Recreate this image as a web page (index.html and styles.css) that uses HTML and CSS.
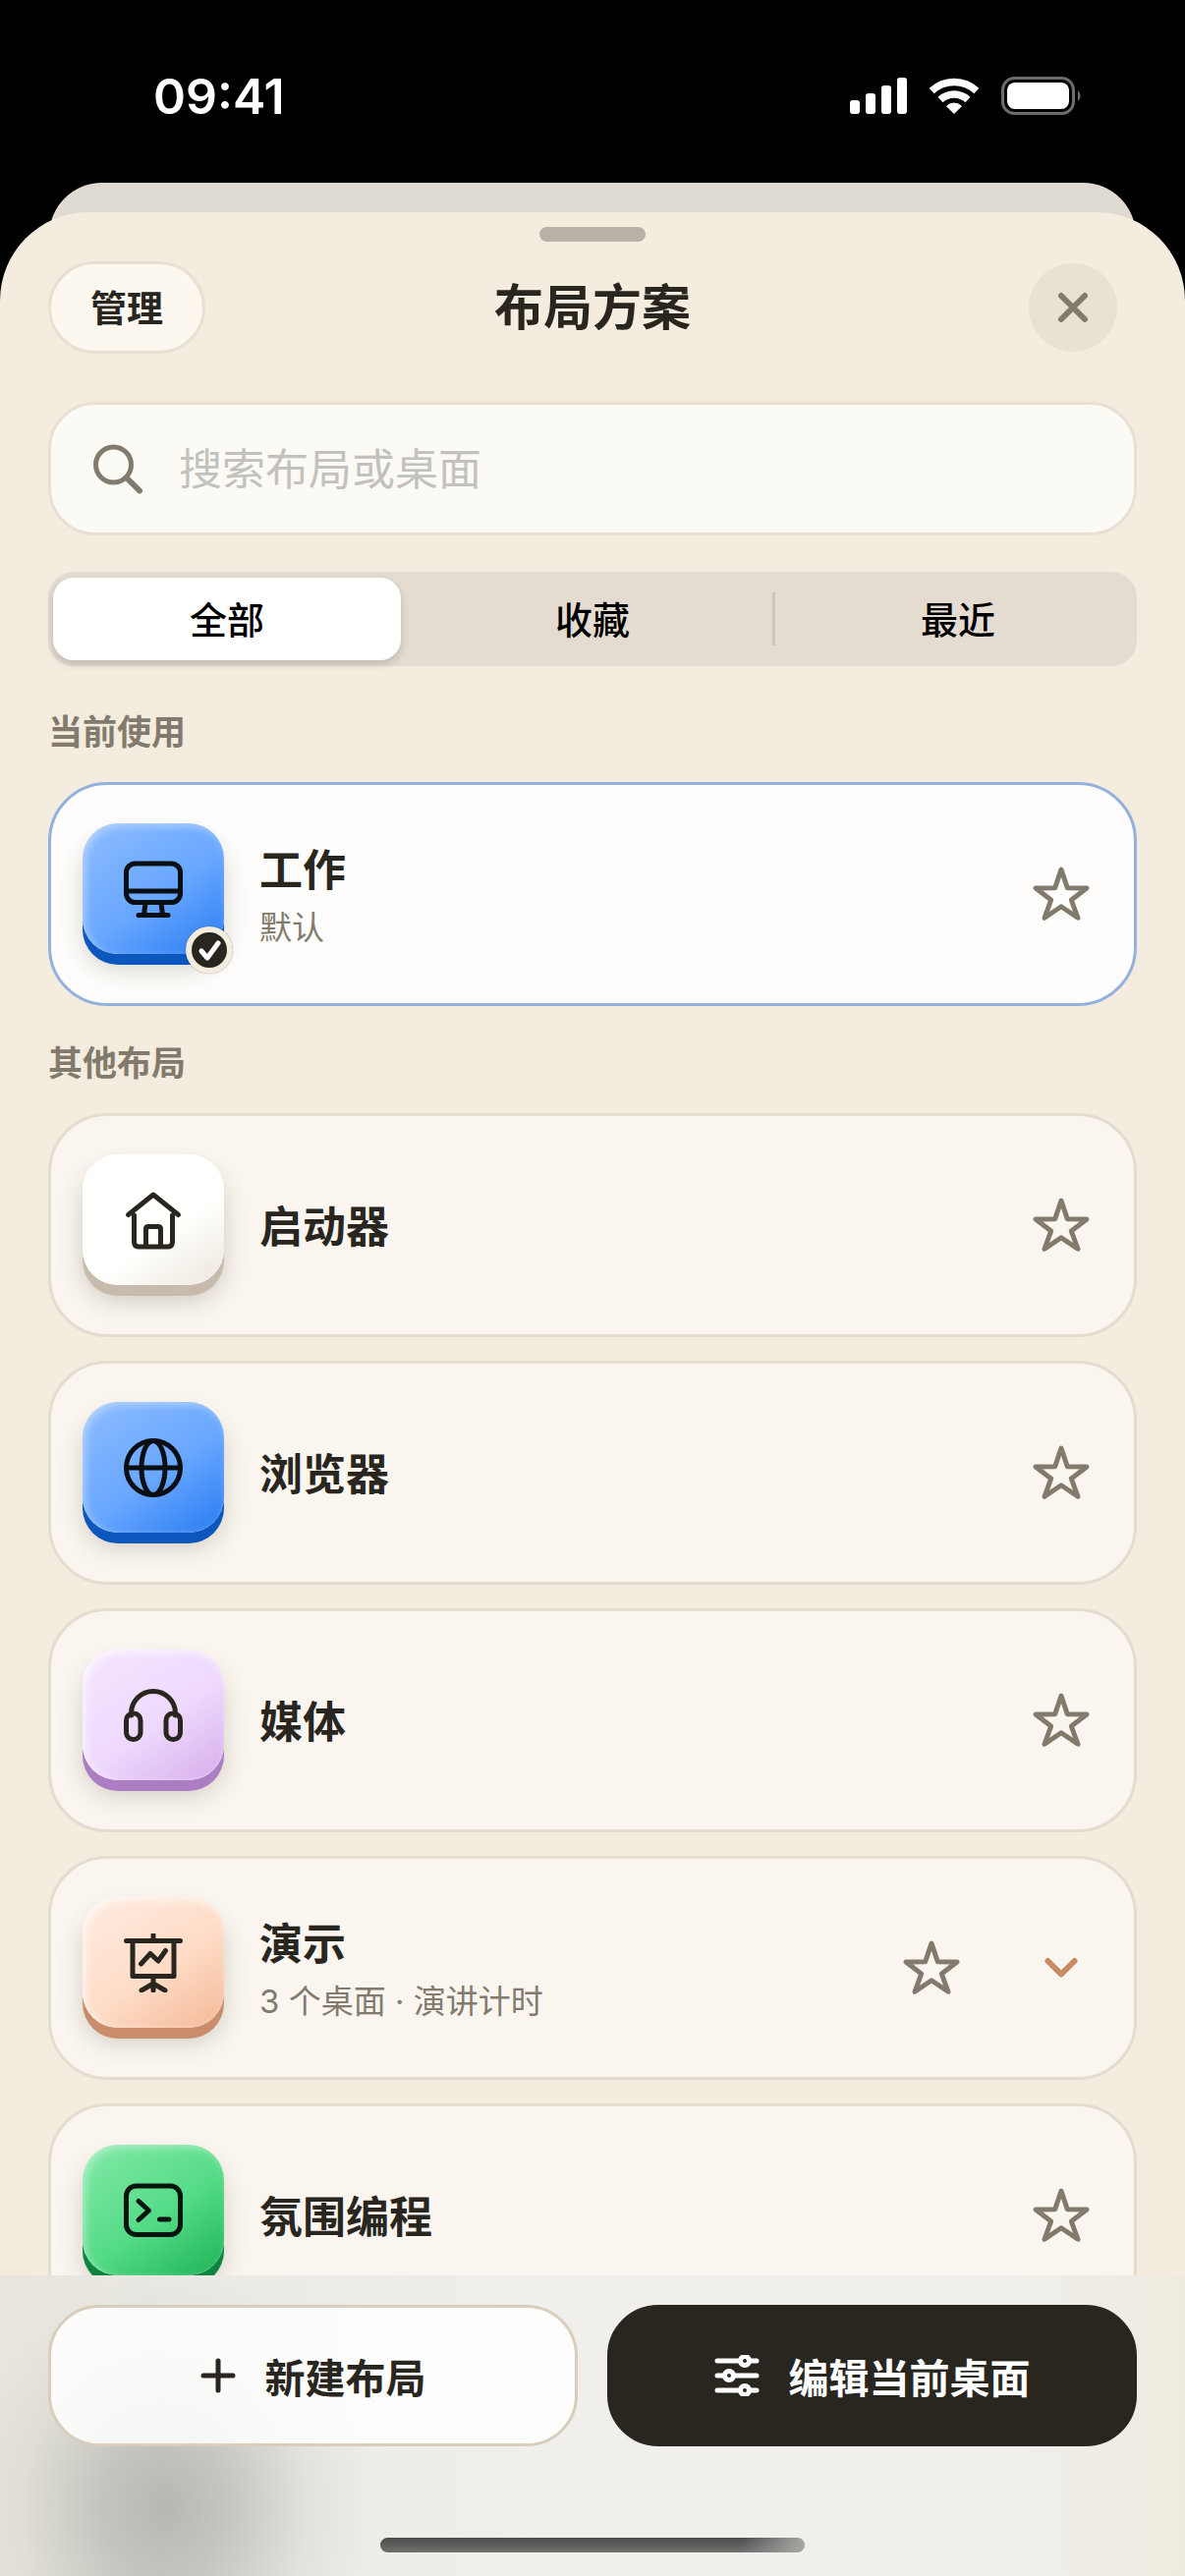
FILE: index.html
```html
<!DOCTYPE html>
<html lang="zh-CN">
<head>
  <meta charset="UTF-8" />
  <meta name="viewport" content="width=device-width, initial-scale=1.0" />
  <title>布局方案</title>
  <link rel="stylesheet" href="styles.css">
</head>
<body>
  <svg class="sprite" aria-hidden="true">
    <symbol id="star" viewBox="0 0 60 60">
      <path d="M30 5 L36.3 23.7 L56 24 L40.3 36 L47 54.3 L30 42.7 L13 54.3 L19.7 36 L4 24 L23.7 23.7 Z"/>
    </symbol>
  </svg>

  <div class="status-bar">
    <span class="time">09:41</span>
    <div class="status-icons">
      <svg width="58" height="40" viewBox="0 0 58 40" fill="#fff" aria-hidden="true">
        <rect x="0" y="24" width="10" height="14" rx="3"/>
        <rect x="16" y="17" width="10" height="21" rx="3"/>
        <rect x="32" y="9" width="10" height="29" rx="3"/>
        <rect x="48" y="1" width="10" height="37" rx="3"/>
      </svg>
      <svg width="52" height="40" viewBox="0 0 52 40" fill="none" stroke="#fff" stroke-width="7.4" aria-hidden="true">
        <path d="M3.2 14.5 A33.3 33.3 0 0 1 48.8 14.5"/>
        <path d="M12 23.5 A20.5 20.5 0 0 1 40 23.5"/>
        <path d="M26 37.5 L18.5 30 A11 11 0 0 1 33.5 30 Z" fill="#fff" stroke="#fff" stroke-width="1" stroke-linejoin="round"/>
      </svg>
      <svg width="83" height="40" viewBox="0 0 83 40" aria-hidden="true">
        <rect x="1.5" y="1.5" width="72" height="36" rx="12" fill="none" stroke="#6b6b6b" stroke-width="3"/>
        <rect x="6" y="6" width="63" height="27" rx="8" fill="#fff"/>
        <path d="M78 14 A7 7 0 0 1 78 25 Z" fill="#6b6b6b"/>
      </svg>
    </div>
  </div>

  <div class="back-sheet"></div>

  <main class="sheet">
    <div class="handle"></div>

    <header class="sheet-header">
      <button class="manage" type="button">管理</button>
      <h1>布局方案</h1>
      <button class="close" type="button" aria-label="关闭">
        <svg width="32" height="32" viewBox="0 0 32 32"><path d="M4 4 L28 28 M28 4 L4 28"/></svg>
      </button>
    </header>

    <label class="search">
      <svg width="52" height="52" viewBox="0 0 52 52" aria-hidden="true">
        <circle cx="21.5" cy="21" r="18"/>
        <path d="M35 34.5 L48 47.5" stroke-width="6"/>
      </svg>
      <input type="search" placeholder="搜索布局或桌面" aria-label="搜索布局或桌面">
    </label>

    <div class="segments" role="tablist">
      <button class="segment active" type="button" role="tab" aria-selected="true">全部</button>
      <button class="segment" type="button" role="tab" aria-selected="false">收藏</button>
      <button class="segment divided" type="button" role="tab" aria-selected="false">最近</button>
    </div>

    <div class="list">
      <h2>当前使用</h2>
      <article class="card current">
        <div class="tile blue">
          <svg class="icon" viewBox="0 0 60 60">
            <rect x="2.5" y="4" width="55" height="39.5" rx="9"/>
            <path d="M2.5 32 H57.5 M22 44 L20.5 56 M38 44 L39.5 56 M15 56.5 H45"/>
          </svg>
          <span class="badge">
            <svg width="36" height="36" viewBox="0 0 36 36"><path d="M10 19 L16 26 L27 11"/></svg>
          </span>
        </div>
        <div class="info"><h3>工作</h3><p>默认</p></div>
        <button class="action" type="button" aria-label="收藏工作"><svg class="star"><use href="#star"/></svg></button>
      </article>

      <h2>其他布局</h2>
      <article class="card">
        <div class="tile white">
          <svg class="icon" viewBox="0 0 60 60">
            <path d="M4.5 24.5 L30 4 L55.5 24.5 M10.5 25 V52 Q10.5 57 15.5 57 H44.5 Q49.5 57 49.5 52 V25 M22.5 57 V39 Q22.5 36.5 25 36.5 H35 Q37.5 36.5 37.5 39 V57"/>
          </svg>
        </div>
        <div class="info"><h3>启动器</h3></div>
        <button class="action" type="button" aria-label="收藏启动器"><svg class="star"><use href="#star"/></svg></button>
      </article>

      <article class="card">
        <div class="tile blue">
          <svg class="icon" viewBox="0 0 60 60">
            <circle cx="30" cy="30" r="27.5"/>
            <ellipse cx="30" cy="30" rx="12" ry="27.5"/>
            <path d="M2.5 30 H57.5"/>
          </svg>
        </div>
        <div class="info"><h3>浏览器</h3></div>
        <button class="action" type="button" aria-label="收藏浏览器"><svg class="star"><use href="#star"/></svg></button>
      </article>

      <article class="card">
        <div class="tile purple">
          <svg class="icon" viewBox="0 0 60 60">
            <path d="M7.5 30 V28 A22.5 22.5 0 0 1 52.5 28 V30"/>
            <rect x="2.5" y="28" width="14.5" height="26.5" rx="7"/>
            <rect x="43" y="28" width="14.5" height="26.5" rx="7"/>
          </svg>
        </div>
        <div class="info"><h3>媒体</h3></div>
        <button class="action" type="button" aria-label="收藏媒体"><svg class="star"><use href="#star"/></svg></button>
      </article>

      <article class="card">
        <div class="tile orange">
          <svg class="icon" viewBox="0 0 60 60">
            <path d="M30 1.5 V7 M2.5 7.5 H57.5 M9 7.5 V43.5 H51 V7.5 M30 43.5 V58 M18 58 L30 51 L42 58 M17.5 31 L27 20.5 L35 28 L42.5 17.5"/>
          </svg>
        </div>
        <div class="info"><h3>演示</h3><p>3 个桌面 · 演讲计时</p></div>
        <button class="action" type="button" aria-label="收藏演示"><svg class="star"><use href="#star"/></svg></button>
        <button class="action" type="button" aria-label="展开演示">
          <svg class="chevron" width="36" height="24" viewBox="0 0 36 24"><path d="M4.5 5 L18 18.5 L31.5 5"/></svg>
        </button>
      </article>

      <article class="card">
        <div class="tile green">
          <svg class="icon" viewBox="0 0 60 60">
            <rect x="2.5" y="5" width="55" height="49.5" rx="10"/>
            <path d="M15 20.5 L25.5 30 L15 39.5 M36.5 39 H46"/>
          </svg>
        </div>
        <div class="info"><h3>氛围编程</h3></div>
        <button class="action" type="button" aria-label="收藏氛围编程"><svg class="star"><use href="#star"/></svg></button>
      </article>
    </div>

    <footer>
      <div class="footer-buttons">
        <button class="btn" type="button">
          <svg width="36" height="36" viewBox="0 0 36 36" aria-hidden="true"><path d="M18 3 V33 M3 18 H33"/></svg>
          新建布局
        </button>
        <button class="btn dark" type="button">
          <svg width="46" height="42" viewBox="0 0 46 42" aria-hidden="true">
            <path d="M3 6 H26 M36 6 H43 M3 21 H10 M20 21 H43 M3 36 H26 M36 36 H43"/>
            <circle cx="31" cy="6" r="4.5"/>
            <circle cx="15" cy="21" r="4.5"/>
            <circle cx="31" cy="36" r="4.5"/>
          </svg>
          编辑当前桌面
        </button>
      </div>
      <div class="home-indicator"></div>
    </footer>
  </main>
</body>
</html>
```

FILE: styles.css
```css
* { box-sizing: border-box; }
body {
  margin: 0;
  height: 100vh;
  display: flex;
  flex-direction: column;
  overflow: hidden;
  background: #000;
  color: #28261f;
  font-family: Inter, "Noto Sans CJK SC", sans-serif;
}
h1, h2, h3, p { margin: 0; }
button {
  margin: 0;
  padding: 0;
  border: none;
  background: none;
  color: inherit;
  font-family: inherit;
  cursor: pointer;
}
svg { display: block; flex: none; }
.sprite { position: absolute; width: 0; height: 0; }

/* status bar */
.status-bar {
  height: 186px;
  padding: 68px 104px 0 156px;
  display: flex;
  justify-content: space-between;
  align-items: flex-start;
  color: #fff;
}
.time { font-size: 50px; line-height: 60px; font-weight: 600; }
.status-icons { display: flex; gap: 22px; padding-top: 10px; }

/* sheets */
.back-sheet {
  flex: none;
  height: 60px;
  margin: 0 50px -30px;
  border-radius: 54px 54px 0 0;
  background: #e0dbd2;
}
.sheet {
  flex: 1;
  min-height: 0;
  display: flex;
  flex-direction: column;
  position: relative;
  padding-top: 15px;
  border-radius: 90px 90px 0 0;
  background: #f4ecdf;
}
.handle {
  flex: none;
  width: 108px;
  height: 15px;
  margin: 0 auto 20px;
  border-radius: 8px;
  background: #b9b1a5;
}
.sheet-header {
  flex: none;
  display: grid;
  grid-template-columns: 1fr auto 1fr;
  align-items: center;
  margin: 0 49px;
}
.sheet-header h1 { font-size: 50px; line-height: 72px; font-weight: 700; }
.manage {
  justify-self: start;
  height: 94px;
  padding: 0 40px 3px;
  border: 3px solid #e8e0d2;
  border-radius: 47px;
  background: #fcf8f0;
  font-size: 37px;
  font-weight: 700;
}
.close {
  justify-self: end;
  display: grid;
  place-items: center;
  width: 90px;
  height: 90px;
  margin-right: 20px;
  border-radius: 50%;
  background: #e9e1d4;
}
.close svg { stroke: #827b6d; stroke-width: 6; stroke-linecap: round; }

.search {
  flex: none;
  display: flex;
  align-items: center;
  gap: 36px;
  height: 136px;
  margin: 49px 49px 0;
  padding: 2px 42px 0;
  border: 3px solid #e8e0d3;
  border-radius: 48px;
  background: #fcfaf5;
}
.search svg { fill: none; stroke: #827b6d; stroke-width: 5; stroke-linecap: round; }
.search input {
  flex: 1;
  min-width: 0;
  padding: 0;
  border: none;
  outline: none;
  background: none;
  color: inherit;
  font: 44px/66px Inter, "Noto Sans CJK SC", sans-serif;
}
.search input::placeholder { color: #c3c1bd; opacity: 1; }

.segments {
  flex: none;
  display: grid;
  grid-template-columns: repeat(3, 1fr);
  gap: 18px;
  height: 96px;
  margin: 37px 49px 0;
  padding: 6px 5px;
  border-radius: 26px;
  background: #e4dcd0;
}
.segment {
  position: relative;
  padding-bottom: 3px;
  border-radius: 21px;
  color: #000;
  font-size: 38px;
  font-weight: 500;
}
.segment.active {
  background: #fff;
  box-shadow: 0 4px 8px rgba(0, 0, 0, 0.16);
}
.segment.divided::before {
  content: "";
  position: absolute;
  left: -12px;
  top: 15px;
  bottom: 15px;
  width: 3px;
  background: #cdc6ba;
}

/* layouts */
.list {
  flex: 1;
  min-height: 0;
  overflow-y: auto;
  scrollbar-width: none;
  padding: 43px 49px 0;
}
.list h2 {
  margin-bottom: 27px;
  color: #827b6d;
  font-size: 35px;
  line-height: 48px;
  font-weight: 700;
}
.card {
  display: flex;
  align-items: center;
  height: 228px;
  margin-bottom: 24px;
  padding: 0 8px 0 32px;
  border: 3px solid #e4dccf;
  border-radius: 60px;
  background: #faf6ef;
}
.card.current {
  margin-bottom: 34px;
  border-color: #93b1dd;
  background: #fefdfb;
}
.tile {
  position: relative;
  flex: none;
  display: grid;
  place-items: center;
  width: 144px;
  height: 133px;
  margin-bottom: 11px;
  border-radius: 36px;
  color: #28261f;
}
.icon {
  width: 60px;
  height: 60px;
  fill: none;
  stroke: currentColor;
  stroke-width: 5;
  stroke-linecap: round;
  stroke-linejoin: round;
}
.tile.blue {
  color: #0a0f14;
  background: linear-gradient(145deg, #8abaff 5%, #68a7ff 55%, #2f80f3 95%);
  box-shadow: inset 3px 3px 8px rgba(255, 255, 255, 0.4), 0 11px 0 #0b57bd, 0 16px 24px rgba(60, 50, 30, 0.2);
}
.tile.white {
  background: linear-gradient(145deg, #fffffd 60%, #ece5dc 100%);
  box-shadow: inset 3px 3px 8px #fff, 0 11px 0 #c6bbad, 0 16px 24px rgba(60, 50, 30, 0.22);
}
.tile.purple {
  background: linear-gradient(145deg, #f5e5ff 5%, #eed9fd 55%, #d8b2ee 95%);
  box-shadow: inset 3px 3px 8px rgba(255, 255, 255, 0.7), 0 11px 0 #ab7ec3, 0 16px 24px rgba(60, 50, 30, 0.2);
}
.tile.orange {
  background: linear-gradient(145deg, #ffebdf 5%, #fedcc7 55%, #f5bc9b 95%);
  box-shadow: inset 3px 3px 8px rgba(255, 255, 255, 0.7), 0 11px 0 #ca8d6b, 0 16px 24px rgba(60, 50, 30, 0.2);
}
.tile.green {
  color: #04140e;
  background: linear-gradient(145deg, #80e8a6 5%, #54db86 55%, #24b75b 95%);
  box-shadow: inset 3px 3px 8px rgba(255, 255, 255, 0.4), 0 11px 0 #0f8440, 0 16px 24px rgba(60, 50, 30, 0.2);
}
.badge {
  position: absolute;
  right: -9px;
  bottom: -20px;
  border: 6px solid #f4ecdf;
  border-radius: 50%;
  background: #28261f;
  box-shadow: 0 0 1px rgba(0, 0, 0, 0.5);
}
.badge svg {
  fill: none;
  stroke: #fff;
  stroke-width: 5;
  stroke-linecap: round;
  stroke-linejoin: round;
}
.info { flex: 1; min-width: 0; margin-left: 36px; padding-top: 4px; }
.info h3 { font-size: 44px; line-height: 64px; font-weight: 700; }
.info p { color: #827b6d; font-size: 33px; line-height: 52px; }
.action {
  flex: none;
  display: grid;
  place-items: center;
  width: 132px;
  height: 132px;
}
.star {
  width: 60px;
  height: 60px;
  fill: none;
  stroke: #827b6d;
  stroke-width: 5;
  stroke-linejoin: round;
}
.chevron {
  fill: none;
  stroke: #c98a66;
  stroke-width: 6;
  stroke-linecap: round;
  stroke-linejoin: round;
}

/* bottom bar */
footer {
  flex: none;
  padding: 30px 49px 24px;
  background:
    radial-gradient(ellipse 210px 240px at 168px 236px, rgba(140, 143, 138, 0.55), rgba(145, 148, 143, 0.42) 30%, rgba(170, 172, 166, 0.14) 70%, rgba(190, 192, 186, 0)),
    linear-gradient(90deg, #e8e5dd, #ebeae5 20%, #f0efeb 45%, #f0efeb 85%, #efebe0);
}
.footer-buttons {
  display: grid;
  grid-template-columns: 1fr 1fr;
  gap: 30px;
}
.btn {
  display: flex;
  align-items: center;
  justify-content: center;
  gap: 30px;
  height: 144px;
  border: 3px solid #d9cdbb;
  border-radius: 52px;
  background: rgba(255, 255, 255, 0.86);
  font-size: 41px;
  font-weight: 700;
}
.btn svg {
  fill: none;
  stroke: currentColor;
  stroke-width: 5;
  stroke-linecap: round;
}
.btn.dark {
  border-color: #28261f;
  background: #28261f;
  color: #fff;
}
.home-indicator {
  width: 432px;
  height: 15px;
  margin: 93px auto 0;
  border-radius: 8px;
  background:
    linear-gradient(90deg, rgba(175, 175, 172, 0) 85%, rgba(175, 175, 172, 0.9)),
    linear-gradient(#4c4d4a, #70706e);
}
```
